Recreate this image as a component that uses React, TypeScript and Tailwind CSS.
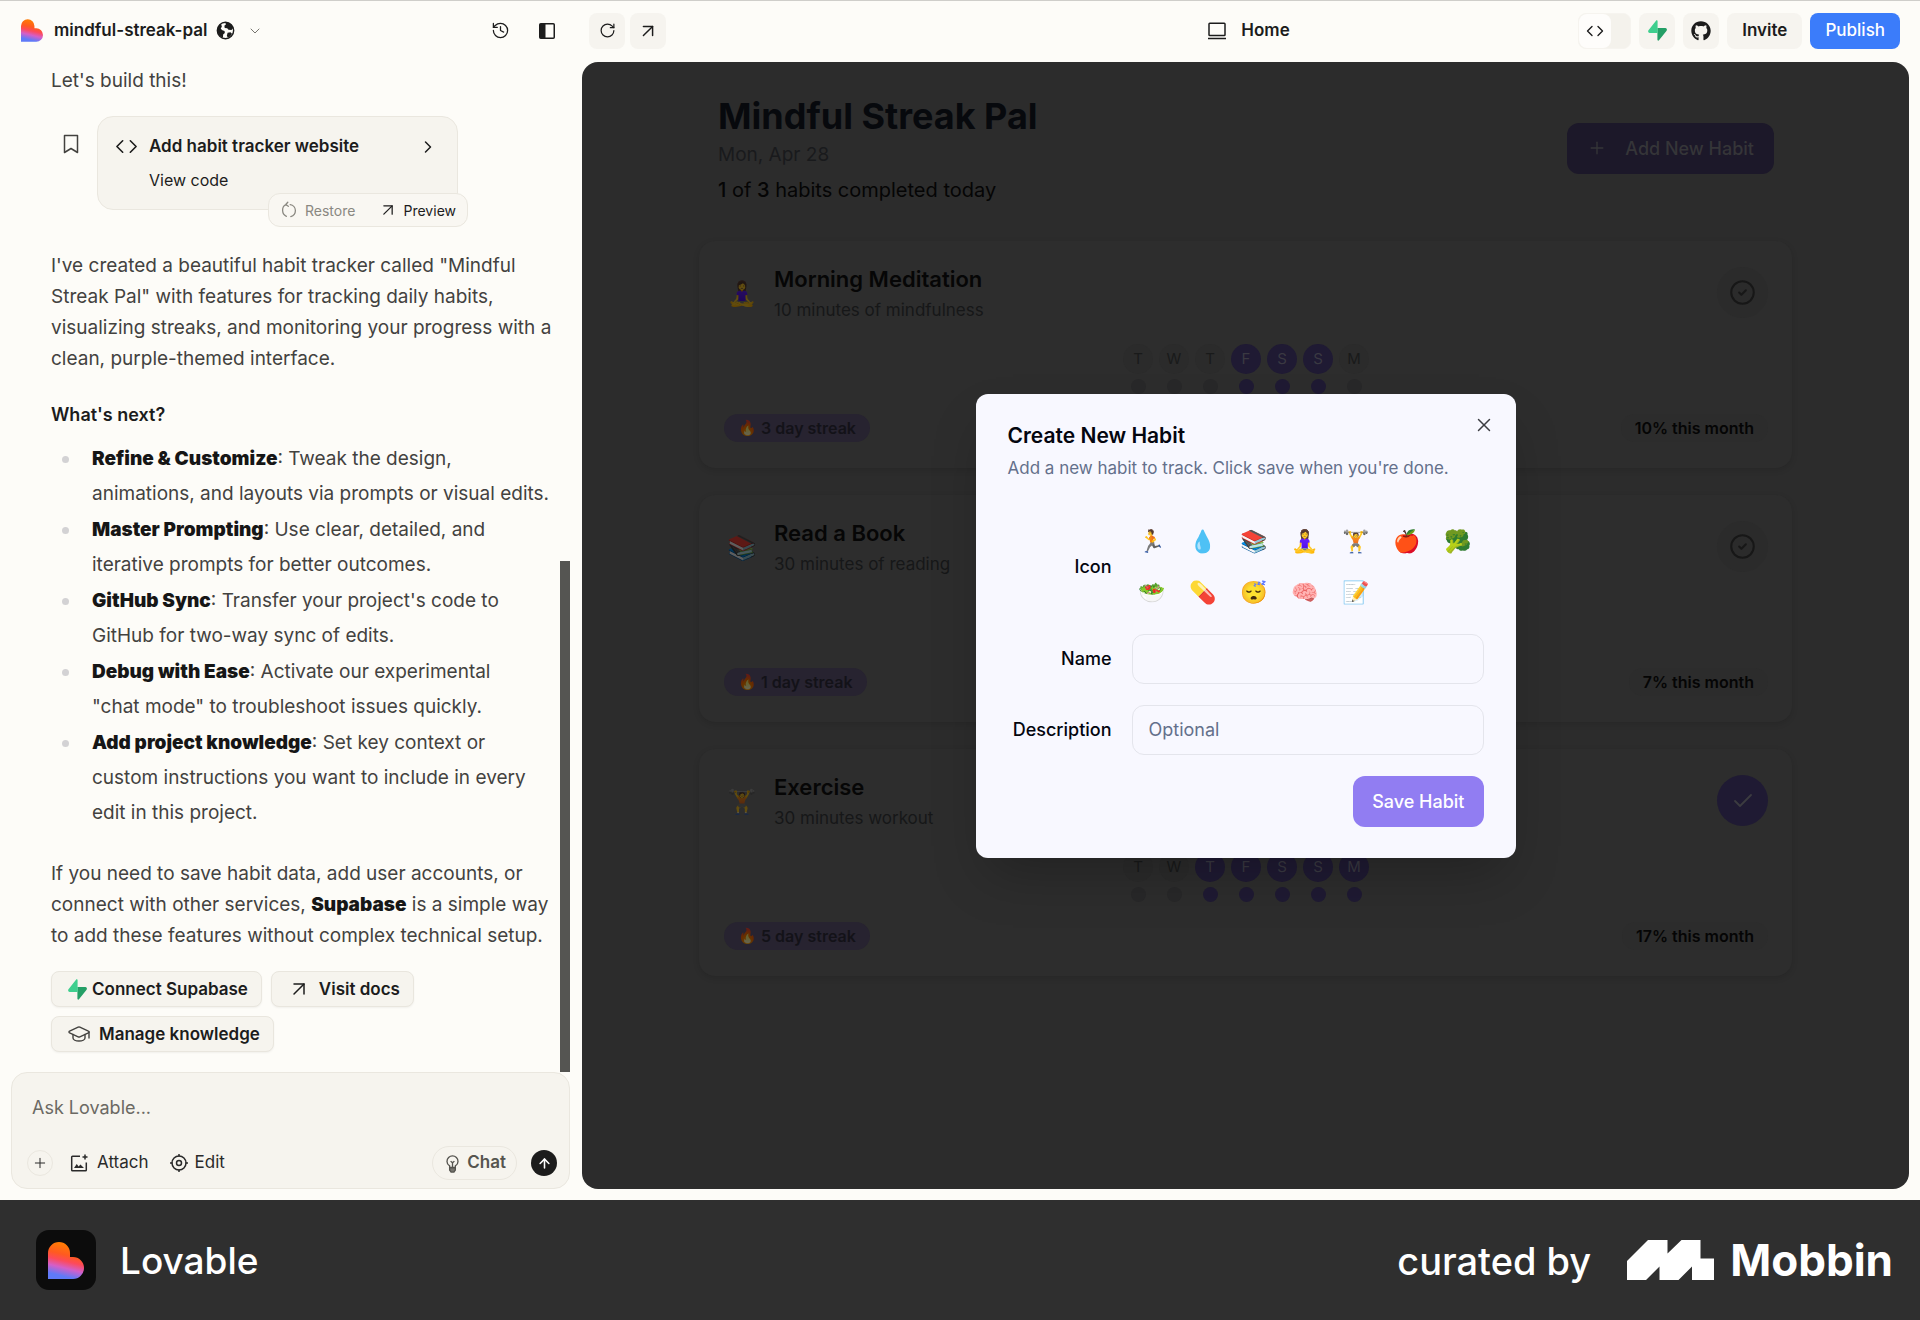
import { Fragment, type ReactNode } from "react";
import {
  ArrowUp,
  ArrowUpRight,
  Check,
  ChevronDown,
  ChevronRight,
  CircleCheck,
  Code,
  GraduationCap,
  History,
  Plus,
  RotateCw,
  X,
} from "lucide-react";
import { FaGithub } from "react-icons/fa";

function HeartLogo({ id, className }: { id: string; className: string }) {
  return (
    <svg viewBox="0 0 36 37" className={className} aria-hidden="true">
      <defs>
        <linearGradient id={id} x1="0.62" y1="0" x2="0.38" y2="1">
          <stop offset="0.1" stopColor="#ff7a05" />
          <stop offset="0.36" stopColor="#ff5a20" />
          <stop offset="0.52" stopColor="#fd4a5a" />
          <stop offset="0.7" stopColor="#d45fc8" />
          <stop offset="0.92" stopColor="#5f7af8" />
        </linearGradient>
      </defs>
      <path d="M0 37V11a11 11 0 0 1 22 0v4h3a11 11 0 0 1 0 22z" fill={`url(#${id})`} />
    </svg>
  );
}

function SupabaseIcon({ className }: { className: string }) {
  return (
    <svg viewBox="0 0 24 24" className={className} aria-hidden="true">
      <path d="M13.7 23.2c-.6.8-1.8.3-1.8-.6V9.2h9c1.600 0 2.500 1.900 1.500 3.100z" fill="#249f66" />
      <path d="M10.300.8c.6-.8 1.800-.3 1.800.6v13.400H3.200c-1.600 0-2.500-1.900-1.500-3.100z" fill="#3ecf8e" />
    </svg>
  );
}

function GlobeIcon() {
  return (
    <svg viewBox="0 0 20 20" className="size-[19px]" aria-hidden="true">
      <circle cx="10" cy="10" r="8.600" fill="none" stroke="#1c1c1c" strokeWidth="1.500" />
      <path d="M1.400 9.500C1.600 7 2.800 4.500 5 3l1.200 2.600L5 8.200l1.700 1.600 2.300.7.300 2.200-1.800 1.600-.2 3.200C4.500 16.500 1.300 13.500 1.400 9.500zM9.800 1.400c4 0 7.300 2.500 8.400 6l-1.900 2.100-3.200-.2-1.300-1.600-2.600-.4-.4-2.300 1.600-1.400zM12.200 12.400l3-.5 1.600 1.400c-.9 1.900-2.400 3.400-4.300 4.400l-1.100-2.300z" fill="#1c1c1c" />
    </svg>
  );
}

function RestoreIcon() {
  return (
    <svg viewBox="0 0 16 18" className="h-[18px] w-4" fill="none" stroke="currentColor" strokeWidth="1.300" strokeLinecap="round" strokeLinejoin="round" aria-hidden="true">
      <path d="M6.800 1.200 4.800 3.500l2.500 1.800M5 3.500C2.800 4.500 1.500 6.800 1.600 9.500c.1 2.500 1.500 4.800 3.800 5.800M9.200 3.600c3 .4 5.200 3 5.200 6 0 3-2 5.400-4.600 6.100" />
    </svg>
  );
}

function SidebarIcon() {
  return (
    <svg viewBox="0 0 18 18" className="size-[18px]" aria-hidden="true">
      <rect x="1.750" y="1.750" width="14.500" height="14.500" rx="1" fill="none" stroke="#1c1c1c" strokeWidth="1.500" />
      <path d="M2 2h5.500v14H2z" fill="#1c1c1c" />
    </svg>
  );
}

function ScreenIcon() {
  return (
    <svg viewBox="0 0 20 18" className="h-[18px] w-5" fill="none" stroke="#1c1c1c" strokeWidth="1.500" aria-hidden="true">
      <rect x="2" y="1.200" width="16" height="12.300" rx="0.800" />
      <path d="M1 16.500h18" />
    </svg>
  );
}

function AttachIcon() {
  return (
    <svg viewBox="0 0 20 20" className="size-5" fill="none" stroke="#2a2a2a" strokeWidth="1.500" aria-hidden="true">
      <path d="M11 3.200H3.500a.8.800 0 0 0-.8.800v13c0 .5.300.8.800.8h13c.500 0 .8-.3.800-.8v-7.500M16 1.500v5M13.500 4h5" />
      <path d="m5 15 2.700-4 2 2.400 1.700-2 3.600 3.600z" fill="#2a2a2a" stroke="none" />
    </svg>
  );
}

function EditIcon() {
  return (
    <svg viewBox="0 0 20 20" className="size-5" fill="none" stroke="#2a2a2a" strokeWidth="1.500" aria-hidden="true">
      <circle cx="10" cy="10" r="7" />
      <circle cx="10" cy="10" r="2.500" />
      <path d="M10 1v2.500M10 16.500V19M1 10h2.500M16.500 10H19" />
    </svg>
  );
}

function BulbIcon() {
  return (
    <svg viewBox="0 0 20 20" className="size-[19px]" fill="none" stroke="#55544f" strokeWidth="1.400" aria-hidden="true">
      <path d="M7 14v-1.500C5.200 11.400 4.200 9.700 4.200 7.800a5.800 5.800 0 0 1 11.600 0c0 1.900-1 3.600-2.800 4.700V14zM8 7.500l2 1.800 2-1.800M10 9.300V14" />
      <path d="M7 14.500h6v2.300L11.500 19h-3L7 16.800z" fill="#77756f" />
    </svg>
  );
}

function MobbinMark() {
  return (
    <svg viewBox="0 0 87 40" className="h-10 w-[87px]" aria-hidden="true">
      <path d="M0 21 21 0h19.500v13.500L54.500 0h19v18.500H87V40H65V26.500L51.500 40h-19V26.500L19 40H0z" fill="#fff" />
    </svg>
  );
}

const steps = [
  { title: "Refine & Customize", lines: ["Tweak the design,", "animations, and layouts via prompts or visual edits."] },
  { title: "Master Prompting", lines: ["Use clear, detailed, and", "iterative prompts for better outcomes."] },
  { title: "GitHub Sync", lines: ["Transfer your project's code to", "GitHub for two-way sync of edits."] },
  { title: "Debug with Ease", lines: ["Activate our experimental", "\"chat mode\" to troubleshoot issues quickly."] },
  { title: "Add project knowledge", lines: ["Set key context or", "custom instructions you want to include in every", "edit in this project."] },
];

const days = ["T", "W", "T", "F", "S", "S", "M"];

type Habit = {
  icon: string;
  name: string;
  detail: string;
  done: boolean[];
  streak: number;
  month: number;
  today: boolean;
};

const habits: Habit[] = [
  { icon: "🧘‍♀️", name: "Morning Meditation", detail: "10 minutes of mindfulness", done: [false, false, false, true, true, true, false], streak: 3, month: 10, today: false },
  { icon: "📚", name: "Read a Book", detail: "30 minutes of reading", done: [false, false, false, false, true, true, false], streak: 1, month: 7, today: false },
  { icon: "🏋️", name: "Exercise", detail: "30 minutes workout", done: [false, false, true, true, true, true, true], streak: 5, month: 17, today: true },
];

const icons = ["🏃", "💧", "📚", "🧘‍♀️", "🏋️", "🍎", "🥦", "🥗", "💊", "😴", "🧠", "📝"];

function ActionButton({ children }: { children: ReactNode }) {
  return (
    <button className="flex h-9 items-center gap-2 rounded-lg border border-[#e9e6de] bg-[#f6f4ee] pr-[13px] pl-[15px] text-[17px] font-semibold text-[#1c1c1c] shadow-xs">
      {children}
    </button>
  );
}

function ChatPane() {
  return (
    <aside className="flex w-[582px] shrink-0 flex-col pr-3">
      <header className="flex h-[61px] items-center pr-[14px] pb-0.5 pl-[21px]">
        <HeartLogo id="heart-small" className="h-[23px] w-[22px]" />
        <button className="ml-[11px] flex items-center gap-2 text-[17px] font-semibold text-[#1c1c1c]">
          mindful-streak-pal
          <GlobeIcon />
          <ChevronDown className="ml-1 size-4 text-[#77756f]" strokeWidth={1.5} />
        </button>
        <div className="ml-auto flex items-center gap-7">
          <button aria-label="History"><History className="size-[19px] text-[#1c1c1c]" strokeWidth={1.6} /></button>
          <button aria-label="Toggle sidebar"><SidebarIcon /></button>
        </div>
      </header>

      <div className="relative flex-1 pt-[3px] pr-[14px] pl-[51px] text-[19px] leading-[31px] text-[#43423f]">
        <p>Let's build this!</p>

        <div className="mt-5 flex items-start">
          <button aria-label="Bookmark" className="mt-[18px] ml-3 w-[34px]">
            <svg viewBox="0 0 16 20" className="h-5 w-4" fill="none" stroke="#43423f" strokeWidth="1.500" aria-hidden="true">
              <path d="M1.500 1.500h13v17L8 14.500l-6.500 4z" strokeLinejoin="round" />
            </svg>
          </button>
          <div className="relative h-[94px] w-[361px] rounded-2xl border border-[#eae7df] bg-[#f6f4ee] pt-[14px] pl-[17px] text-[#1c1c1c]">
            <div className="flex items-center text-[17px] font-semibold">
              <Code className="mr-[11px] size-[23px]" strokeWidth={1.7} />
              Add habit tracker website
              <ChevronRight className="mr-[19px] ml-auto size-5" strokeWidth={1.8} />
            </div>
            <button className="ml-[34px] block text-[16px] leading-9">View code</button>
            <div className="absolute top-[76px] left-[170px] flex h-[34px] w-[200px] items-center justify-between rounded-xl border border-[#eae7df] bg-[#f9f7f2] pr-[11px] pl-3 text-[14px]">
              <button className="flex items-center gap-2 text-[#8a8881]"><RestoreIcon />Restore</button>
              <button className="flex items-center gap-[6px]"><ArrowUpRight className="size-5" strokeWidth={1.5} />Preview</button>
            </div>
          </div>
        </div>

        <p className="mt-10">
          I've created a beautiful habit tracker called "Mindful Streak Pal" with features for tracking daily habits, visualizing streaks, and monitoring your progress with a clean, purple-themed interface.
        </p>
        <h2 className="mt-[25px] text-[18px] font-semibold text-[#1c1c1c]">What's next?</h2>
        <ul className="mt-[11px] space-y-px leading-[35px]">
          {steps.map((s) => (
            <li key={s.title} className="flex">
              <span className="mt-[15px] mr-[23px] ml-[11px] size-[7px] shrink-0 rounded-full bg-[#d3d2d4]" />
              <div>
                <strong className="font-black text-[#161616]">{s.title}</strong>:{" "}
                {s.lines.map((line, i) => (
                  <Fragment key={line}>{i > 0 && <br />}{line}</Fragment>
                ))}
              </div>
            </li>
          ))}
        </ul>
        <p className="mt-7">
          If you need to save habit data, add user accounts, or connect with other services, <strong className="font-black text-[#161616]">Supabase</strong> is a simple way to add these features without complex technical setup.
        </p>
        <div className="mt-5 flex flex-wrap gap-[9px]">
          <ActionButton><SupabaseIcon className="-mr-1 size-[21px]" />Connect Supabase</ActionButton>
          <ActionButton><ArrowUpRight className="size-6" strokeWidth={1.5} />Visit docs</ActionButton>
          <ActionButton><GraduationCap className="size-6 text-[#43423f]" strokeWidth={1.4} />Manage knowledge</ActionButton>
        </div>
        <div className="absolute right-0 bottom-0 h-[511px] w-[10px] bg-[#555552]" />
      </div>

      <form className="mb-[11px] ml-[11px] flex h-[117px] flex-col justify-between rounded-2xl border border-[#eae7df] bg-[#f6f4ee] pt-5 pr-3 pb-2 pl-4">
        <textarea aria-label="Message" placeholder="Ask Lovable..." rows={1} className="h-[30px] resize-none bg-transparent pl-1 text-[18px] leading-[30px] outline-none placeholder:text-[#6b6963]" />
        <div className="flex items-center text-[17px] text-[#2a2a2a]">
          <button type="button" aria-label="Add" className="-ml-px flex size-[26px] items-center justify-center rounded-full border border-[#eae7df]"><Plus className="size-4" strokeWidth={1.5} /></button>
          <button type="button" className="ml-4 flex items-center gap-2"><AttachIcon />Attach</button>
          <button type="button" className="ml-5 flex items-center gap-[6px]"><EditIcon />Edit</button>
          <button type="button" className="mr-[14px] ml-auto flex h-[34px] items-center gap-[5px] rounded-full border border-[#eae7df] px-[10px] font-semibold text-[#55544f]"><BulbIcon />Chat</button>
          <button type="submit" aria-label="Send" className="flex size-[26px] items-center justify-center rounded-full bg-[#1c1c1c] text-white"><ArrowUp className="size-[15px]" strokeWidth={2.5} /></button>
        </div>
      </form>
    </aside>
  );
}

function HabitCard({ habit }: { habit: Habit }) {
  return (
    <article className="flex h-[227px] flex-col rounded-2xl bg-[#2d2d2d] pt-[22px] pr-6 pb-[26px] pl-[25px] shadow-[0_2px_6px_rgba(0,0,0,0.12)]">
      <div className="flex items-start">
        <span className="mt-[15px] w-[50px] pl-[3px] text-[24px] leading-8 brightness-[.38]">{habit.icon}</span>
        <div>
          <h3 className="text-[22px] leading-8 font-semibold text-[#060606]">{habit.name}</h3>
          <p className="text-[17px] leading-[30px] text-[#161718]">{habit.detail}</p>
        </div>
        {habit.today ? (
          <button aria-label="Completed" className="mt-1 ml-auto flex size-[51px] items-center justify-center rounded-full bg-[#1f1a33] text-[#3c3c40]"><Check className="size-6" strokeWidth={1.8} /></button>
        ) : (
          <button aria-label="Mark complete" className="mt-1 ml-auto flex size-[51px] items-center justify-center rounded-full bg-[#2b2b2b] text-[#171717]"><CircleCheck className="size-[27px]" strokeWidth={1.8} /></button>
        )}
      </div>
      <div className="mt-auto flex justify-center gap-[6px] text-[15px]">
        {days.map((d, i) => (
          <div key={i} className="flex flex-col items-center gap-[5px]">
            <span className={habit.done[i] ? "flex size-[30px] items-center justify-center rounded-full bg-[#1f1a33] text-[#3a3942]" : "flex size-[30px] items-center justify-center rounded-full bg-[#2b2b2b] text-[#191a1a]"}>{d}</span>
            <span className={habit.done[i] ? "size-[15px] rounded-full bg-[#1f1a33]" : "size-[15px] rounded-full bg-[#282829]"} />
          </div>
        ))}
      </div>
      <div className="mt-5 flex items-center justify-between text-[16px] leading-7 font-semibold">
        <span className="flex items-center gap-1 rounded-full bg-[#272330] px-[14px] text-[#131218]"><span className="text-[15px] brightness-[.4]">🔥</span>{habit.streak} day streak</span>
        <span className="rounded-full bg-[#2c2c2c] px-[14px] text-[#050505]">{habit.month}% this month</span>
      </div>
    </article>
  );
}

function HabitDialog() {
  return (
    <div className="absolute inset-0 flex items-center justify-center">
      <div role="dialog" aria-labelledby="dialog-title" className="relative flex h-[464px] w-[540px] flex-col rounded-xl bg-[#f8f8ff] px-8 pt-[26px] pb-8 text-[18px] text-[#04060f] shadow-2xl">
        <h2 id="dialog-title" className="text-[21px] leading-8 font-semibold">Create New Habit</h2>
        <p className="text-[17px] leading-8 text-[#64708b]">Add a new habit to track. Click save when you're done.</p>
        <button aria-label="Close" className="absolute top-5 right-[21px] text-[#3c3d42]"><X className="size-[22px]" strokeWidth={1.6} /></button>
        <form className="mt-[37px] grid grid-cols-[104px_minmax(0,1fr)] items-center gap-x-5 gap-y-[21px]">
          <span id="icon-label" className="text-right font-medium">Icon</span>
          <div role="group" aria-labelledby="icon-label" className="grid grid-cols-[repeat(7,39px)] gap-x-3 gap-y-2.5">
            {icons.map((icon) => (
              <button key={icon} type="button" className="flex h-[41px] items-center justify-center text-[22px] leading-8">{icon}</button>
            ))}
          </div>
          <label htmlFor="habit-name" className="text-right font-medium">Name</label>
          <input id="habit-name" className="h-[50px] w-full rounded-xl border border-[#e4e5ec] px-4 outline-none" />
          <label htmlFor="habit-description" className="text-right font-medium">Description</label>
          <input id="habit-description" placeholder="Optional" className="h-[50px] w-full rounded-xl border border-[#e4e5ec] px-4 outline-none placeholder:text-[#64708b]" />
          <button type="button" className="col-start-2 h-[51px] justify-self-end rounded-xl bg-[#917df2] px-[19px] font-medium text-white">Save Habit</button>
        </form>
      </div>
    </div>
  );
}

function PreviewPane() {
  return (
    <section className="flex min-w-0 flex-1 flex-col pr-[11px]">
      <header className="flex h-[61px] items-center pr-[9px] pb-0.5 pl-[7px] text-[17px] font-semibold text-[#1c1c1c]">
        <div className="flex flex-1 gap-[5px]">
          <button aria-label="Reload" className="flex size-9 items-center justify-center rounded-lg bg-[#f6f4ef]"><RotateCw className="size-[17px]" strokeWidth={1.7} /></button>
          <button aria-label="Open in new tab" className="flex size-9 items-center justify-center rounded-lg bg-[#f6f4ef]"><ArrowUpRight className="size-[22px]" strokeWidth={1.6} /></button>
        </div>
        <button className="ml-2 flex items-center gap-[14px]"><ScreenIcon />Home</button>
        <div className="flex flex-1 items-center justify-end gap-2">
          <button aria-label="Toggle code view" className="flex h-9 w-[53px] rounded-lg border border-[#f6f4ef] bg-[#f4f2ec]">
            <span className="flex h-full w-8 items-center justify-center rounded-lg bg-[#fefdfb]"><Code className="size-[18px]" strokeWidth={1.8} /></span>
          </button>
          <button aria-label="Supabase" className="flex size-9 items-center justify-center rounded-lg bg-[#f6f4ef]"><SupabaseIcon className="size-[21px]" /></button>
          <button aria-label="GitHub" className="flex size-9 items-center justify-center rounded-lg bg-[#f6f4ef]"><FaGithub className="size-5" /></button>
          <button className="h-9 rounded-lg bg-[#f6f4ef] px-[15px]">Invite</button>
          <button className="h-9 rounded-lg bg-[#3b7cfa] px-[15px] font-medium text-white">Publish</button>
        </div>
      </header>

      <div className="relative mb-[11px] flex-1 rounded-2xl bg-[#2c2c2c] px-[117px] pt-[31px]">
        <div className="flex items-center justify-between pr-[18px] pl-[19px]">
          <div>
            <h1 className="text-[36px] leading-[46px] font-bold text-[#07090d]">Mindful Streak Pal</h1>
            <p className="text-[19px] leading-8 text-[#191a1c]">Mon, Apr 28</p>
            <p className="text-[20px] leading-[38px] text-[#050505]"><span className="font-medium">1</span> of <span className="font-medium">3</span> habits completed today</p>
          </div>
          <button className="-mt-[6px] flex h-[51px] items-center gap-[18px] rounded-xl bg-[#1c1829] px-5 text-[18px] font-medium text-[#353538]"><Plus className="size-5" strokeWidth={1.6} />Add New Habit</button>
        </div>
        <div className="mt-8 flex flex-col gap-[27px]">
          {habits.map((h) => <HabitCard key={h.name} habit={h} />)}
        </div>
        <HabitDialog />
      </div>
    </section>
  );
}

export default function App() {
  return (
    <div className="flex min-h-screen flex-col bg-[#fdfcf8] font-['Inter',sans-serif]">
      <main className="flex flex-1 border-t border-[#cfceca]">
        <ChatPane />
        <PreviewPane />
      </main>
      <footer className="flex h-[120px] items-center bg-[#2f2f2f] pr-[27px] pl-9 text-white">
        <div className="flex size-[60px] items-center justify-center rounded-[13px] bg-[#0c0c0c]">
          <HeartLogo id="heart-large" className="h-[37px] w-9" />
        </div>
        <span className="ml-6 pt-0.5 text-[37px] font-medium">Lovable</span>
        <span className="mr-9 ml-auto pt-0.5 text-[38px] font-medium">curated by</span>
        <MobbinMark />
        <span className="ml-4 text-[44px] font-bold">Mobbin</span>
      </footer>
    </div>
  );
}
